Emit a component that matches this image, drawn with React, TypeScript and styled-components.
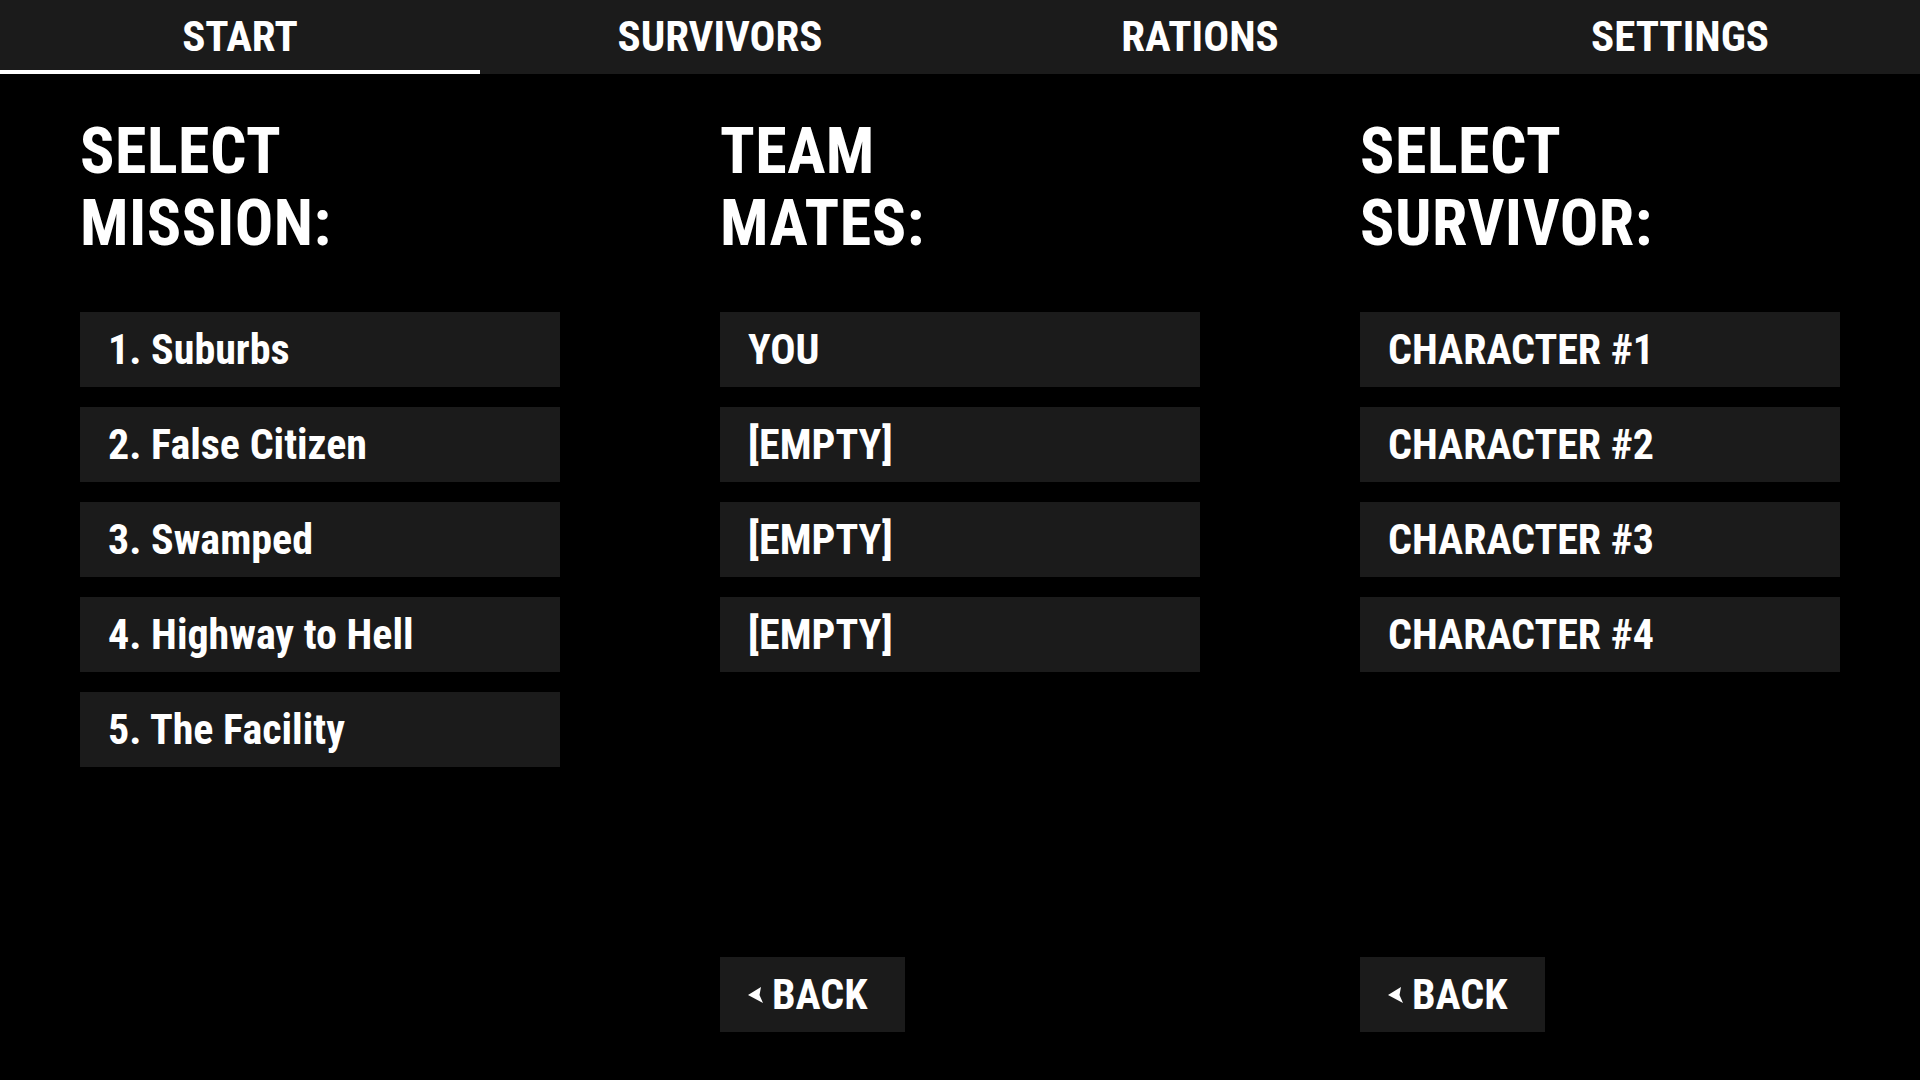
import React, { FC } from "react";
import styled, { createGlobalStyle } from "styled-components";

const GlobalStyle = createGlobalStyle`
  html, body {
    margin: 0;
    padding: 0;
    background: #000;
    color: #fff;
    font-family: "Roboto Condensed", Roboto, "Liberation Sans", sans-serif;
    font-stretch: condensed;
    font-weight: bold;
  }
`;

const Page = styled.div`
  width: 1920px;
  height: 1080px;
  display: flex;
  flex-direction: column;
  background: #000;
  overflow: hidden;
`;

// Top navigation
const NavBar = styled.nav`
  display: grid;
  grid-template-columns: repeat(4, 1fr);
  height: 74px;
  background: #1b1b1b;
`;

const Tab = styled.div<{ $active?: boolean }>`
  display: flex;
  align-items: center;
  justify-content: center;
  box-sizing: border-box;
  padding-top: 2px;
  border-bottom: 4px solid ${(p) => (p.$active ? "#fff" : "transparent")};
  font-size: 43px;
  line-height: 1;
  color: #fff;
`;

// Columns
const Main = styled.main`
  flex: 1;
  display: grid;
  grid-template-columns: repeat(3, 480px);
  column-gap: 160px;
  padding: 42px 80px 48px;
`;

const Column = styled.section`
  display: flex;
  flex-direction: column;
`;

const Heading = styled.h1`
  margin: 0 0 52px;
  font-size: 64px;
  line-height: 72px;
  font-weight: bold;
  letter-spacing: 0.5px;
`;

const List = styled.div`
  display: flex;
  flex-direction: column;
  gap: 20px;
`;

const Item = styled.div`
  height: 75px;
  padding-left: 28px;
  background: #1b1b1b;
  font-size: 42px;
  line-height: 75px;
  white-space: nowrap;
`;

const BackButton = styled.button`
  margin-top: auto;
  align-self: flex-start;
  display: flex;
  align-items: center;
  gap: 9px;
  width: 185px;
  height: 75px;
  padding: 0 0 0 28px;
  border: none;
  background: #1b1b1b;
  color: #fff;
  font-family: inherit;
  font-stretch: inherit;
  font-weight: bold;
  font-size: 42px;
  line-height: 75px;
  cursor: pointer;
`;

const Chevron: FC = () => (
  <svg width="15" height="16" viewBox="0 0 15 16">
    <path d="M0 8 L13 0 L11.5 8 L15 16 Z" fill="#fff" />
  </svg>
);

const tabs = ["START", "SURVIVORS", "RATIONS", "SETTINGS"];
const missions = ["1. Suburbs", "2. False Citizen", "3. Swamped", "4. Highway to Hell", "5. The Facility"];
const mates = ["YOU", "[EMPTY]", "[EMPTY]", "[EMPTY]"];
const survivors = ["CHARACTER #1", "CHARACTER #2", "CHARACTER #3", "CHARACTER #4"];

const App: FC = () => {
  return (
    <Page>
      <GlobalStyle />
      <NavBar>
        {tabs.map((t, i) => (
          <Tab key={t} $active={i === 0}>
            {t}
          </Tab>
        ))}
      </NavBar>
      <Main>
        <Column>
          <Heading>
            SELECT
            <br />
            MISSION:
          </Heading>
          <List>
            {missions.map((m) => (
              <Item key={m}>{m}</Item>
            ))}
          </List>
        </Column>
        <Column>
          <Heading>
            TEAM
            <br />
            MATES:
          </Heading>
          <List>
            {mates.map((m, i) => (
              <Item key={i}>{m}</Item>
            ))}
          </List>
          <BackButton>
            <Chevron />
            BACK
          </BackButton>
        </Column>
        <Column>
          <Heading>
            SELECT
            <br />
            SURVIVOR:
          </Heading>
          <List>
            {survivors.map((s) => (
              <Item key={s}>{s}</Item>
            ))}
          </List>
          <BackButton>
            <Chevron />
            BACK
          </BackButton>
        </Column>
      </Main>
    </Page>
  );
};

export default App;
